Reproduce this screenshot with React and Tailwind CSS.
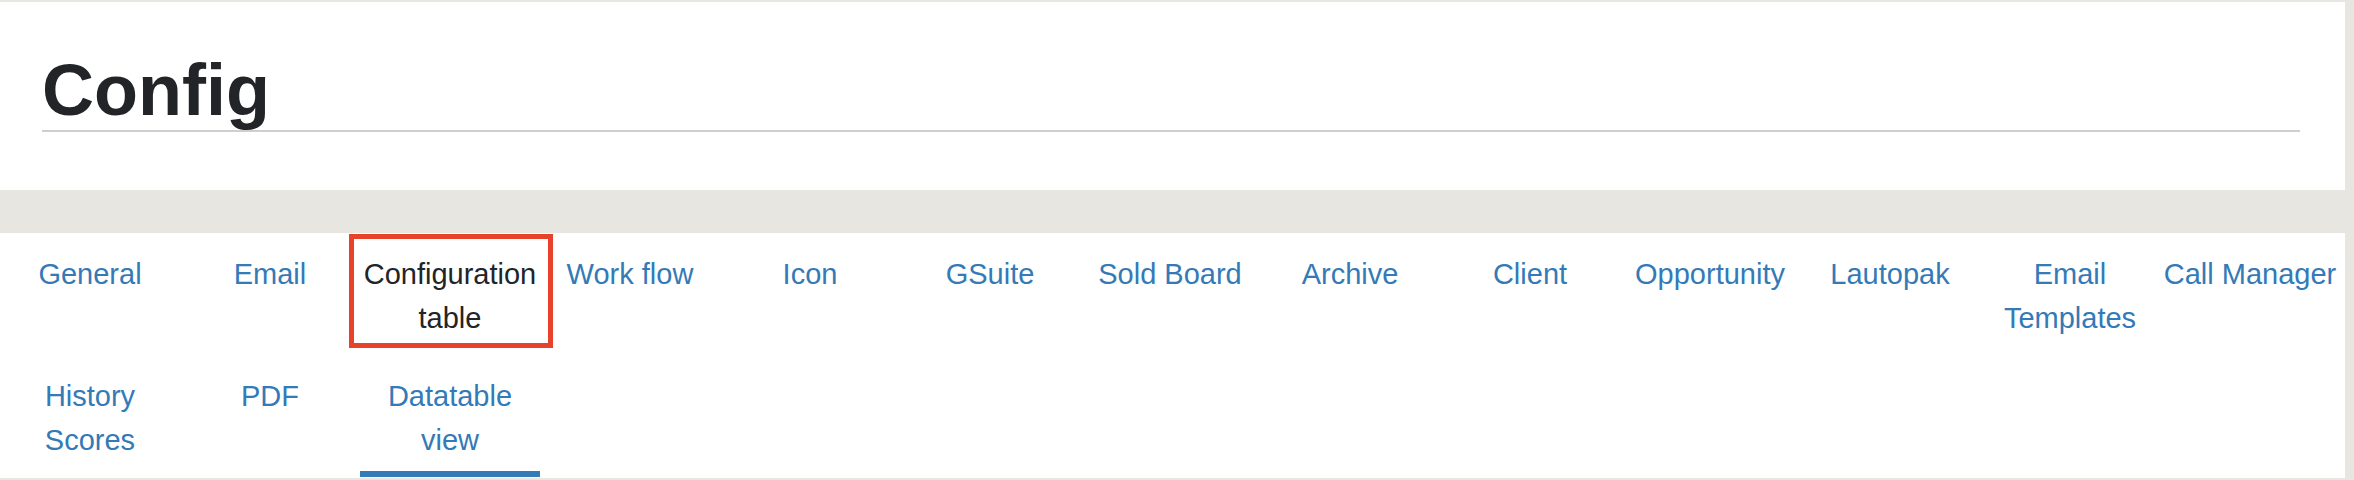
const tabs = [
  { label: "General" },
  { label: "Email" },
  { label: "Configuration table", highlighted: true },
  { label: "Work flow" },
  { label: "Icon" },
  { label: "GSuite" },
  { label: "Sold Board" },
  { label: "Archive" },
  { label: "Client" },
  { label: "Opportunity" },
  { label: "Lautopak" },
  { label: "Email Templates" },
  { label: "Call Manager" },
  { label: "History Scores" },
  { label: "PDF" },
  { label: "Datatable view", active: true },
];

export default function App() {
  return (
    <div
      className="min-h-[480px] w-[2354px] bg-[#e8e6e1] pt-[2px]"
      style={{ fontFamily: '"Liberation Sans", Arial, sans-serif' }}
    >
      {/* Header */}
      <div className="w-[2345px] h-[188px] bg-white pl-[42px] pr-[45px] pt-[49px]">
        <h1 className="text-[72px] leading-[1.1] font-bold text-[#222428] border-b-2 border-[#cfcfcf]">
          Config
        </h1>
      </div>

      {/* Tabs */}
      <div className="w-[2345px] mt-[43px] bg-white pb-px">
        <ul className="flex flex-wrap">
          {tabs.map((tab) => (
            <li
              key={tab.label}
              className={`relative w-[180px] pt-[19px] pb-[9px] border-b-[6px] text-center text-[29px] leading-[44px] ${
                tab.active ? "border-[#337ab7]" : "border-transparent"
              }`}
            >
              <a
                href="#"
                className={`block ${
                  tab.highlighted ? "text-[#222428]" : "text-[#337ab7]"
                }`}
              >
                {tab.label}
              </a>
              {tab.highlighted && (
                <div className="absolute left-[-11px] top-px w-[204px] h-[114px] border-[5px] border-[#e8422a] pointer-events-none"></div>
              )}
            </li>
          ))}
        </ul>
      </div>
    </div>
  );
}
